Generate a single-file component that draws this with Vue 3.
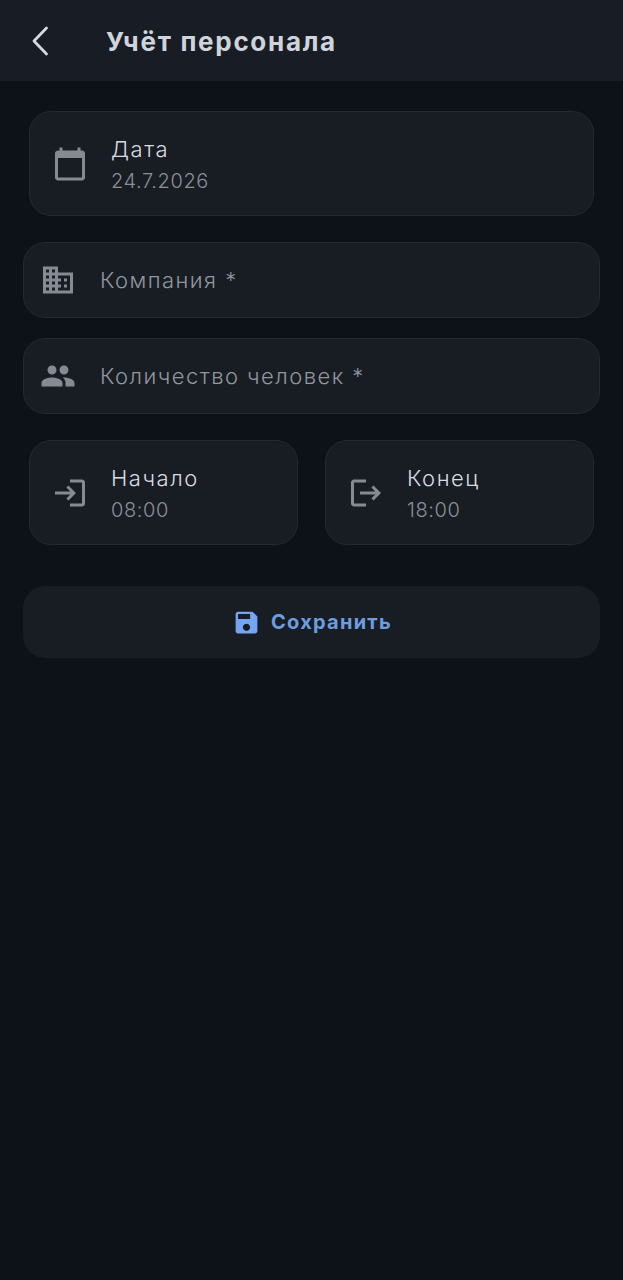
<script setup>
const icons = {
  calendar: 'M20 3h-1V1h-2v2H7V1H5v2H4c-1.1 0-2 .9-2 2v16c0 1.1.9 2 2 2h16c1.1 0 2-.9 2-2V5c0-1.1-.9-2-2-2zm0 18H4V8h16v13z',
  domain: 'M12 7V3H2v18h20V7H12zM6 19H4v-2h2v2zm0-4H4v-2h2v2zm0-4H4V9h2v2zm0-4H4V5h2v2zm4 12H8v-2h2v2zm0-4H8v-2h2v2zm0-4H8V9h2v2zm0-4H8V5h2v2zm10 12h-8v-2h2v-2h-2v-2h2v-2h-2V9h8v10zm-2-8h-2v2h2v-2zm0 4h-2v2h2v-2z',
  people: 'M16 11c1.66 0 2.99-1.34 2.99-3S17.66 5 16 5c-1.66 0-3 1.34-3 3s1.34 3 3 3zm-8 0c1.66 0 2.99-1.34 2.99-3S9.66 5 8 5C6.34 5 5 6.34 5 8s1.34 3 3 3zm0 2c-2.33 0-7 1.17-7 3.5V19h14v-2.5c0-2.33-4.67-3.5-7-3.5zm8 0c-.29 0-.62.02-.97.05 1.16.84 1.97 1.97 1.97 3.45V19h6v-2.5c0-2.33-4.67-3.5-7-3.5z',
  login: 'M11 7L9.6 8.4l2.6 2.6H2v2h10.2l-2.6 2.6L11 17l5-5-5-5zm9 12h-8v2h8c1.1 0 2-.9 2-2V5c0-1.1-.9-2-2-2h-8v2h8v14z',
  logout: 'M17 7l-1.41 1.41L18.17 11H8v2h10.17l-2.58 2.58L17 17l5-5zM4 5h8V3H4c-1.1 0-2 .9-2 2v14c0 1.1.9 2 2 2h8v-2H4V5z',
  save: 'M17 3H5c-1.11 0-2 .9-2 2v14c0 1.1.89 2 2 2h14c1.1 0 2-.9 2-2V7l-4-4zm-5 16c-1.66 0-3-1.34-3-3s1.34-3 3-3 3 1.34 3 3-1.34 3-3 3zm3-10H5V5h10v4z',
}

const inputs = [
  { icon: icons.domain, label: 'Компания *' },
  { icon: icons.people, label: 'Количество человек *' },
]

const times = [
  { icon: icons.login, label: 'Начало', value: '08:00' },
  { icon: icons.logout, label: 'Конец', value: '18:00' },
]
</script>

<template>
  <div class="screen">
    <header class="top-bar">
      <button class="back" aria-label="Назад">
        <svg width="20" height="30" viewBox="0 0 20 30" fill="none">
          <path d="M16.5 2 L4 15 L16.5 28" stroke="#d5d8dd" stroke-width="2.8" stroke-linecap="round" stroke-linejoin="round" />
        </svg>
      </button>
      <h1 class="title">Учёт персонала</h1>
    </header>

    <main class="content">
      <div class="card date-card">
        <svg class="icon" viewBox="0 0 24 24"><path :d="icons.calendar" /></svg>
        <div class="card-text">
          <div class="card-label">Дата</div>
          <div class="card-value">24.7.2026</div>
        </div>
      </div>

      <div v-for="field in inputs" :key="field.label" class="field">
        <svg class="icon" viewBox="0 0 24 24"><path :d="field.icon" /></svg>
        <span class="placeholder">{{ field.label }}</span>
      </div>

      <div class="time-row">
        <div v-for="t in times" :key="t.label" class="card">
          <svg class="icon" viewBox="0 0 24 24"><path :d="t.icon" /></svg>
          <div class="card-text">
            <div class="card-label">{{ t.label }}</div>
            <div class="card-value">{{ t.value }}</div>
          </div>
        </div>
      </div>

      <button class="save">
        <svg class="save-icon" viewBox="0 0 24 24"><path :d="icons.save" /></svg>
        <span>Сохранить</span>
      </button>
    </main>
  </div>
</template>

<style>
html,
body {
  background: #0d1118;
}
</style>

<style scoped>
.screen {
  min-height: 1280px;
  background: #0d1118;
  font-family: Inter, "Noto Sans", sans-serif;
}

.top-bar {
  display: flex;
  align-items: center;
  height: 81px;
  padding-left: 30px;
  background: #181d25;
}

.back {
  display: flex;
  width: 20px;
  margin-right: 56px;
  padding: 0;
  border: 0;
  background: none;
}

.title {
  margin: 2px 0 0;
  font-size: 26px;
  font-weight: 700;
  letter-spacing: 1.7px;
  color: #d0d4da;
}

.content {
  display: flex;
  flex-direction: column;
  padding: 30px 23px 0;
}

.card {
  display: flex;
  align-items: center;
  flex: 1;
  gap: 23px;
  height: 105px;
  padding-left: 22px;
  box-sizing: border-box;
  border: 1px solid #242930;
  border-radius: 22px;
  background: #181c23;
}

.date-card {
  flex: none;
  margin: 0 6px 26px;
}

.icon {
  flex: none;
  width: 36px;
  height: 36px;
  fill: #868b93;
}

.card-text {
  display: flex;
  flex-direction: column;
  gap: 3px;
  padding-top: 2px;
}

.card-label {
  font-size: 22px;
  font-weight: 300;
  line-height: 30px;
  letter-spacing: 1.55px;
  color: #d8dbe0;
}

.card-value {
  font-size: 20px;
  font-weight: 300;
  line-height: 28px;
  letter-spacing: 0.6px;
  color: #8b9098;
}

.field {
  display: flex;
  align-items: center;
  gap: 24px;
  height: 76px;
  margin-bottom: 20px;
  padding-left: 16px;
  box-sizing: border-box;
  border: 1px solid #242930;
  border-radius: 22px;
  background: #181c23;
}

.placeholder {
  font-size: 22px;
  font-weight: 300;
  letter-spacing: 1.45px;
  color: #92969e;
}

.time-row {
  display: flex;
  gap: 27px;
  margin: 6px 6px 41px;
}

.save {
  display: flex;
  align-items: center;
  justify-content: center;
  gap: 10px;
  height: 72px;
  padding: 0 0 0 1px;
  border: 0;
  border-radius: 22px;
  background: #181c23;
  font-family: inherit;
  font-size: 20px;
  font-weight: 700;
  letter-spacing: 1.25px;
  color: #6e9ce0;
}

.save-icon {
  width: 29px;
  height: 29px;
  fill: #74a5f2;
}
</style>
